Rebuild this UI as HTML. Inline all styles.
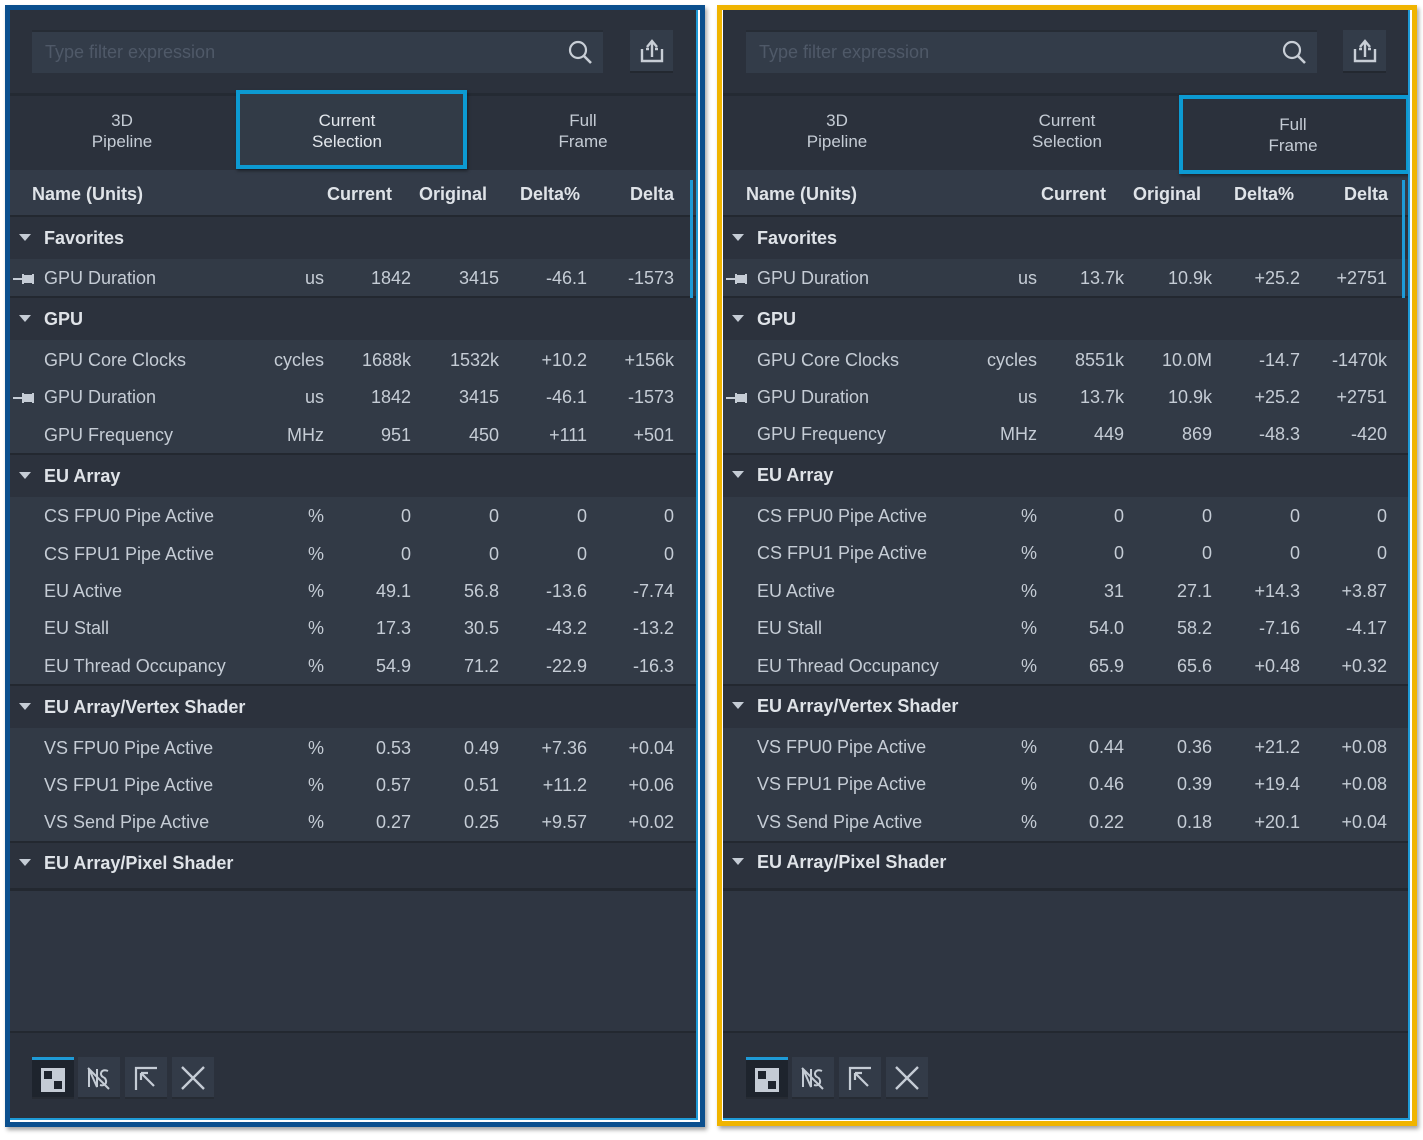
<!DOCTYPE html>
<html><head><meta charset="utf-8"><style>
*{margin:0;padding:0;box-sizing:border-box}
body{width:1423px;height:1140px;background:#fff;position:relative;overflow:hidden;font-family:"Liberation Sans",sans-serif;color:#c5ccd5}
.p{position:absolute;top:0;width:712px;height:1140px}
.frame{position:absolute;left:5px;top:5px;width:700px;height:1122px;border:5px solid #0b4f8e;box-shadow:2px 3px 4px rgba(0,0,0,.35)}
.inner{position:absolute;left:10px;top:10px;width:688px;height:1110px;background:#2b313c;border-right:2px solid #1e9ad6;border-bottom:2px solid #1e9ad6;overflow:hidden}
.abs{position:absolute}
.search{left:22px;top:20px;width:571px;height:43px;background:#333c49;border-top:2px solid #262c35}
.search span{position:absolute;left:13px;top:10px;font-size:18px;color:#4f5968}
.exp{left:620px;top:20px;width:43px;height:43px;background:#333c49;border-bottom:2px solid #232830}
.sep{left:0;width:688px;height:3px;background:#242a33}
.tab{position:absolute;top:100px;width:200px;text-align:center;font-size:17px;line-height:21px;color:#c5ccd5;z-index:3}
.hl{position:absolute;border:4px solid #0c9ad2;background:#323b47;box-shadow:1px 2px 3px rgba(0,0,0,.4);z-index:2}
.hdr{left:0;top:160px;width:688px;height:46px;background:#333b48}
.hdr b,.r b{position:absolute;font-size:18px;color:#dfe3e8}
.band{position:absolute;left:0;width:688px}
.g{background:#2c323d}
.it{background:#323a46}
.line{position:absolute;left:0;width:688px;height:2px;background:#232830}
.r{position:absolute;left:0;width:688px;height:20px;font-size:18px}
.r span{position:absolute;top:0;white-space:nowrap}
.n{left:34px}
.u{right:374px}.c1{right:287px}.c2{right:199px}.c3{right:111px}.c4{right:24px}
.tri{position:absolute;left:9px;top:6px;width:0;height:0;border-left:6px solid transparent;border-right:6px solid transparent;border-top:7px solid #c5ccd5}
.pin{position:absolute;left:3px;top:5px;width:22px;height:12px}
.btn{position:absolute;top:1047px;width:42px;height:42px;background:#333b48;border-bottom:2px solid #262b33}
.scroll{position:absolute;left:680px;top:170px;width:3px;height:118px;background:#1e9ad6}
</style></head><body>

<!-- LEFT -->
<div class="p" style="left:0">
<div class="frame"></div>
<div class="inner">
 <div class="abs search"><span>Type filter expression</span>
  <svg class="abs" style="left:536px;top:8px" width="26" height="26" viewBox="0 0 26 26"><circle cx="10" cy="10" r="8" fill="none" stroke="#c8ced6" stroke-width="2.2"/><path d="M16 16 L23 23" stroke="#c8ced6" stroke-width="2.6"/></svg></div>
 <div class="abs exp"><svg class="abs" style="left:9px;top:8px" width="26" height="26" viewBox="0 0 26 26"><path d="M3 11 V23 H23 V11 M7 11 H10 M16 11 H19" fill="none" stroke="#c8ced6" stroke-width="2.4"/><path d="M13 19 V4 M8 9 L13 3 L18 9" fill="none" stroke="#c8ced6" stroke-width="2.4"/></svg></div>
 <div class="sep abs" style="top:83px"></div>
 <div class="hl" style="left:226px;top:80px;width:231px;height:79px"></div>
 <div class="tab" style="left:12px">3D<br>Pipeline</div>
 <div class="tab" style="left:237px;top:100px;color:#e4e8ed">Current<br>Selection</div>
 <div class="tab" style="left:473px">Full<br>Frame</div>
 <div class="abs hdr"><b style="left:22px;top:14px">Name (Units)</b><b style="right:306px;top:14px">Current</b><b style="right:211px;top:14px">Original</b><b style="right:118px;top:14px">Delta%</b><b style="right:24px;top:14px">Delta</b></div>
 <div class="line" style="top:205px"></div>
 <div class="band g" style="top:207px;height:42px"></div>
 <div class="band it" style="top:249px;height:38px"></div>
 <div class="line" style="top:286px"></div>
 <div class="band g" style="top:288px;height:42px"></div>
 <div class="band it" style="top:330px;height:114px"></div>
 <div class="line" style="top:443px"></div>
 <div class="band g" style="top:445px;height:42px"></div>
 <div class="band it" style="top:487px;height:188px"></div>
 <div class="line" style="top:674px"></div>
 <div class="band g" style="top:676px;height:42px"></div>
 <div class="band it" style="top:718px;height:114px"></div>
 <div class="line" style="top:831px"></div>
 <div class="band g" style="top:833px;height:45px"></div>
 <div class="line" style="top:878px;height:3px"></div>
 <div class="band it" style="top:881px;height:141px;background:#2f3642"></div>
 <div class="line" style="top:1021px"></div>
 <div class="scroll"></div>

 <div class="r" style="top:218px"><i class="tri"></i><b style="left:34px">Favorites</b></div>
 <div class="r" style="top:258px"><svg class="pin" viewBox="0 0 22 12"><path d="M0 6H10M10 1V11M10 3H20V9H10M20 1V11" stroke="#c5ccd5" stroke-width="2" fill="#c5ccd5"/></svg><span class="n">GPU Duration</span><span class="u">us</span><span class="c1">1842</span><span class="c2">3415</span><span class="c3">-46.1</span><span class="c4">-1573</span></div>
 <div class="r" style="top:299px"><i class="tri"></i><b style="left:34px">GPU</b></div>
 <div class="r" style="top:340px"><span class="n">GPU Core Clocks</span><span class="u">cycles</span><span class="c1">1688k</span><span class="c2">1532k</span><span class="c3">+10.2</span><span class="c4">+156k</span></div>
 <div class="r" style="top:377px"><svg class="pin" viewBox="0 0 22 12"><path d="M0 6H10M10 1V11M10 3H20V9H10M20 1V11" stroke="#c5ccd5" stroke-width="2" fill="#c5ccd5"/></svg><span class="n">GPU Duration</span><span class="u">us</span><span class="c1">1842</span><span class="c2">3415</span><span class="c3">-46.1</span><span class="c4">-1573</span></div>
 <div class="r" style="top:415px"><span class="n">GPU Frequency</span><span class="u">MHz</span><span class="c1">951</span><span class="c2">450</span><span class="c3">+111</span><span class="c4">+501</span></div>
 <div class="r" style="top:456px"><i class="tri"></i><b style="left:34px">EU Array</b></div>
 <div class="r" style="top:496px"><span class="n">CS FPU0 Pipe Active</span><span class="u">%</span><span class="c1">0</span><span class="c2">0</span><span class="c3">0</span><span class="c4">0</span></div>
 <div class="r" style="top:534px"><span class="n">CS FPU1 Pipe Active</span><span class="u">%</span><span class="c1">0</span><span class="c2">0</span><span class="c3">0</span><span class="c4">0</span></div>
 <div class="r" style="top:571px"><span class="n">EU Active</span><span class="u">%</span><span class="c1">49.1</span><span class="c2">56.8</span><span class="c3">-13.6</span><span class="c4">-7.74</span></div>
 <div class="r" style="top:608px"><span class="n">EU Stall</span><span class="u">%</span><span class="c1">17.3</span><span class="c2">30.5</span><span class="c3">-43.2</span><span class="c4">-13.2</span></div>
 <div class="r" style="top:646px"><span class="n">EU Thread Occupancy</span><span class="u">%</span><span class="c1">54.9</span><span class="c2">71.2</span><span class="c3">-22.9</span><span class="c4">-16.3</span></div>
 <div class="r" style="top:687px"><i class="tri"></i><b style="left:34px">EU Array/Vertex Shader</b></div>
 <div class="r" style="top:728px"><span class="n">VS FPU0 Pipe Active</span><span class="u">%</span><span class="c1">0.53</span><span class="c2">0.49</span><span class="c3">+7.36</span><span class="c4">+0.04</span></div>
 <div class="r" style="top:765px"><span class="n">VS FPU1 Pipe Active</span><span class="u">%</span><span class="c1">0.57</span><span class="c2">0.51</span><span class="c3">+11.2</span><span class="c4">+0.06</span></div>
 <div class="r" style="top:802px"><span class="n">VS Send Pipe Active</span><span class="u">%</span><span class="c1">0.27</span><span class="c2">0.25</span><span class="c3">+9.57</span><span class="c4">+0.02</span></div>
 <div class="r" style="top:843px"><i class="tri"></i><b style="left:34px">EU Array/Pixel Shader</b></div>

 <div class="btn" style="left:22px;background:#1e242d;border-top:3px solid #1e9ad6"><svg class="abs" style="left:8px;top:7px" width="26" height="26" viewBox="0 0 26 26"><rect x="1" y="1" width="24" height="24" fill="#c5ccd5"/><rect x="4" y="4" width="8" height="8" fill="#1e242d"/><rect x="14" y="14" width="8" height="8" fill="#1e242d"/></svg></div>
 <div class="btn" style="left:68px"><svg class="abs" style="left:8px;top:8px" width="26" height="26" viewBox="0 0 26 26"><path d="M3 22V4L11 22V4M22 6C15 3 13 10 17 12C22 14 21 22 14 20M2 3L23 24" fill="none" stroke="#c5ccd5" stroke-width="2"/></svg></div>
 <div class="btn" style="left:115px"><svg class="abs" style="left:8px;top:8px" width="26" height="26" viewBox="0 0 26 26"><path d="M3 25V3H24M8 8L21 21M8 8H15M8 8V15" fill="none" stroke="#c5ccd5" stroke-width="2.2"/></svg></div>
 <div class="btn" style="left:162px"><svg class="abs" style="left:8px;top:8px" width="26" height="26" viewBox="0 0 26 26"><path d="M2 2L24 24M24 2L2 24" stroke="#c5ccd5" stroke-width="2.4"/></svg></div>
</div>
</div>

<!-- RIGHT -->
<div class="p" style="left:713px">
<div class="frame" style="border-color:#f0b400;left:4px;width:700px;height:1121px"></div>
<div class="inner" style="left:10px;width:687px;border-color:#1e9ad6">
 <div class="abs search" style="left:23px"><span>Type filter expression</span>
  <svg class="abs" style="left:536px;top:8px" width="26" height="26" viewBox="0 0 26 26"><circle cx="10" cy="10" r="8" fill="none" stroke="#c8ced6" stroke-width="2.2"/><path d="M16 16 L23 23" stroke="#c8ced6" stroke-width="2.6"/></svg></div>
 <div class="abs exp" style="left:620px"><svg class="abs" style="left:9px;top:8px" width="26" height="26" viewBox="0 0 26 26"><path d="M3 11 V23 H23 V11 M7 11 H10 M16 11 H19" fill="none" stroke="#c8ced6" stroke-width="2.4"/><path d="M13 19 V4 M8 9 L13 3 L18 9" fill="none" stroke="#c8ced6" stroke-width="2.4"/></svg></div>
 <div class="sep abs" style="top:83px"></div>
 <div class="hl" style="left:456px;top:85px;width:231px;height:79px;background:#2b313c"></div>
 <div class="tab" style="left:14px">3D<br>Pipeline</div>
 <div class="tab" style="left:244px">Current<br>Selection</div>
 <div class="tab" style="left:470px;top:104px">Full<br>Frame</div>
 <div class="abs hdr"><b style="left:23px;top:14px">Name (Units)</b><b style="right:305px;top:14px">Current</b><b style="right:210px;top:14px">Original</b><b style="right:117px;top:14px">Delta%</b><b style="right:23px;top:14px">Delta</b></div>
 <div class="line" style="top:205px"></div>
 <div class="band g" style="top:207px;height:42px"></div>
 <div class="band it" style="top:249px;height:38px"></div>
 <div class="line" style="top:286px"></div>
 <div class="band g" style="top:288px;height:42px"></div>
 <div class="band it" style="top:330px;height:114px"></div>
 <div class="line" style="top:443px"></div>
 <div class="band g" style="top:445px;height:42px"></div>
 <div class="band it" style="top:487px;height:188px"></div>
 <div class="line" style="top:674px"></div>
 <div class="band g" style="top:676px;height:42px"></div>
 <div class="band it" style="top:718px;height:114px"></div>
 <div class="line" style="top:831px"></div>
 <div class="band g" style="top:833px;height:45px"></div>
 <div class="line" style="top:878px;height:3px"></div>
 <div class="band it" style="top:881px;height:141px;background:#2f3642"></div>
 <div class="line" style="top:1021px"></div>
 <div class="scroll" style="left:679px"></div>

 <div class="r" style="top:218px"><i class="tri"></i><b style="left:34px">Favorites</b></div>
 <div class="r" style="top:258px"><svg class="pin" viewBox="0 0 22 12"><path d="M0 6H10M10 1V11M10 3H20V9H10M20 1V11" stroke="#c5ccd5" stroke-width="2" fill="#c5ccd5"/></svg><span class="n">GPU Duration</span><span class="u">us</span><span class="c1">13.7k</span><span class="c2">10.9k</span><span class="c3">+25.2</span><span class="c4">+2751</span></div>
 <div class="r" style="top:299px"><i class="tri"></i><b style="left:34px">GPU</b></div>
 <div class="r" style="top:340px"><span class="n">GPU Core Clocks</span><span class="u">cycles</span><span class="c1">8551k</span><span class="c2">10.0M</span><span class="c3">-14.7</span><span class="c4">-1470k</span></div>
 <div class="r" style="top:377px"><svg class="pin" viewBox="0 0 22 12"><path d="M0 6H10M10 1V11M10 3H20V9H10M20 1V11" stroke="#c5ccd5" stroke-width="2" fill="#c5ccd5"/></svg><span class="n">GPU Duration</span><span class="u">us</span><span class="c1">13.7k</span><span class="c2">10.9k</span><span class="c3">+25.2</span><span class="c4">+2751</span></div>
 <div class="r" style="top:414px"><span class="n">GPU Frequency</span><span class="u">MHz</span><span class="c1">449</span><span class="c2">869</span><span class="c3">-48.3</span><span class="c4">-420</span></div>
 <div class="r" style="top:455px"><i class="tri"></i><b style="left:34px">EU Array</b></div>
 <div class="r" style="top:496px"><span class="n">CS FPU0 Pipe Active</span><span class="u">%</span><span class="c1">0</span><span class="c2">0</span><span class="c3">0</span><span class="c4">0</span></div>
 <div class="r" style="top:533px"><span class="n">CS FPU1 Pipe Active</span><span class="u">%</span><span class="c1">0</span><span class="c2">0</span><span class="c3">0</span><span class="c4">0</span></div>
 <div class="r" style="top:571px"><span class="n">EU Active</span><span class="u">%</span><span class="c1">31</span><span class="c2">27.1</span><span class="c3">+14.3</span><span class="c4">+3.87</span></div>
 <div class="r" style="top:608px"><span class="n">EU Stall</span><span class="u">%</span><span class="c1">54.0</span><span class="c2">58.2</span><span class="c3">-7.16</span><span class="c4">-4.17</span></div>
 <div class="r" style="top:646px"><span class="n">EU Thread Occupancy</span><span class="u">%</span><span class="c1">65.9</span><span class="c2">65.6</span><span class="c3">+0.48</span><span class="c4">+0.32</span></div>
 <div class="r" style="top:686px"><i class="tri"></i><b style="left:34px">EU Array/Vertex Shader</b></div>
 <div class="r" style="top:727px"><span class="n">VS FPU0 Pipe Active</span><span class="u">%</span><span class="c1">0.44</span><span class="c2">0.36</span><span class="c3">+21.2</span><span class="c4">+0.08</span></div>
 <div class="r" style="top:764px"><span class="n">VS FPU1 Pipe Active</span><span class="u">%</span><span class="c1">0.46</span><span class="c2">0.39</span><span class="c3">+19.4</span><span class="c4">+0.08</span></div>
 <div class="r" style="top:802px"><span class="n">VS Send Pipe Active</span><span class="u">%</span><span class="c1">0.22</span><span class="c2">0.18</span><span class="c3">+20.1</span><span class="c4">+0.04</span></div>
 <div class="r" style="top:842px"><i class="tri"></i><b style="left:34px">EU Array/Pixel Shader</b></div>

 <div class="btn" style="left:23px;background:#1e242d;border-top:3px solid #1e9ad6"><svg class="abs" style="left:8px;top:7px" width="26" height="26" viewBox="0 0 26 26"><rect x="1" y="1" width="24" height="24" fill="#c5ccd5"/><rect x="4" y="4" width="8" height="8" fill="#1e242d"/><rect x="14" y="14" width="8" height="8" fill="#1e242d"/></svg></div>
 <div class="btn" style="left:69px"><svg class="abs" style="left:8px;top:8px" width="26" height="26" viewBox="0 0 26 26"><path d="M3 22V4L11 22V4M22 6C15 3 13 10 17 12C22 14 21 22 14 20M2 3L23 24" fill="none" stroke="#c5ccd5" stroke-width="2"/></svg></div>
 <div class="btn" style="left:116px"><svg class="abs" style="left:8px;top:8px" width="26" height="26" viewBox="0 0 26 26"><path d="M3 25V3H24M8 8L21 21M8 8H15M8 8V15" fill="none" stroke="#c5ccd5" stroke-width="2.2"/></svg></div>
 <div class="btn" style="left:163px"><svg class="abs" style="left:8px;top:8px" width="26" height="26" viewBox="0 0 26 26"><path d="M2 2L24 24M24 2L2 24" stroke="#c5ccd5" stroke-width="2.4"/></svg></div>
</div>
</div>
</body></html>
